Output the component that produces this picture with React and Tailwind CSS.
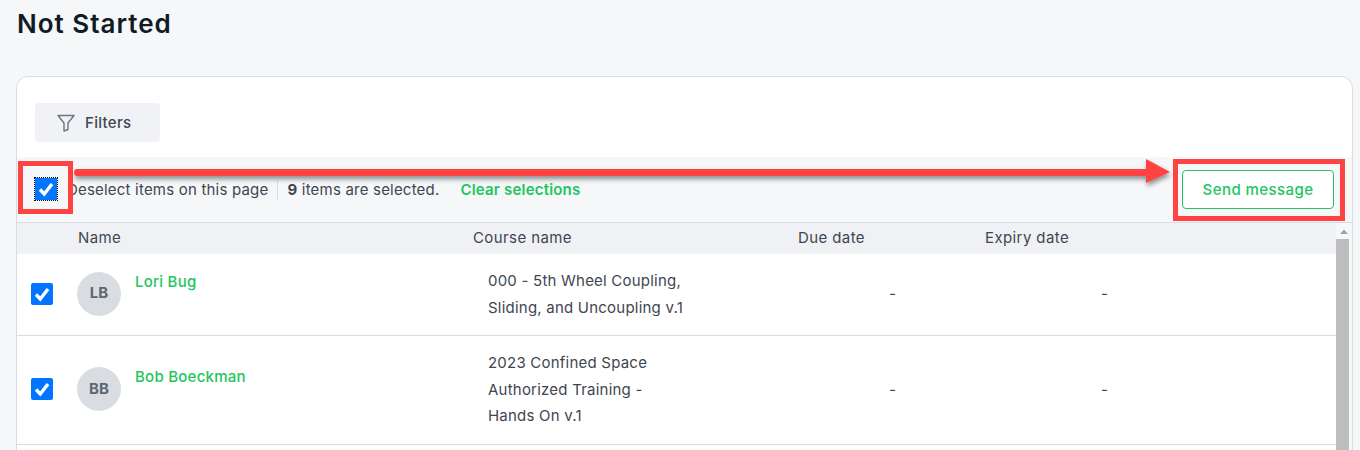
import React from 'react';

const rows = [
    { initials: 'LB', name: 'Lori Bug', course: ['000 - 5th Wheel Coupling,', 'Sliding, and Uncoupling v.1'], h: 'h-[82px]' },
    { initials: 'BB', name: 'Bob Boeckman', course: ['2023 Confined Space', 'Authorized Training -', 'Hands On v.1'], h: 'h-[109px]' },
];

const Check = ({ focused }) => (
    <span className={`w-[22px] h-[22px] bg-[#0075ff] rounded-[2px] flex items-center justify-center shrink-0 ${focused ? 'outline-1 outline-dotted outline-black rounded-none mb-[2px]' : ''}`}>
        <svg viewBox="0 0 22 22" className="w-full h-full">
            <path d="M5 11.5 L9.3 16 L17 6" fill="none" stroke="#fff" strokeWidth="3.4" />
        </svg>
    </span>
);

const Row = ({ row }) => (
    <div className={`${row.h} flex border-b border-[#d9dde2] bg-white pr-[17px]`}>
        <div className="w-[60px] pl-[14px] pb-[2px] flex items-center"><Check /></div>
        <div className="w-[396px] pb-[2px] flex items-center">
            <div className="w-[44px] h-[44px] rounded-full bg-[#d9dde2] text-[#5d6772] font-bold text-[15px] tracking-normal flex items-center justify-center">{row.initials}</div>
            <div className="ml-[14px] text-[#22c55e] font-medium text-[15px] tracking-[0.25px] leading-[20px] pb-[24px]">{row.name}</div>
        </div>
        <div className="w-[325px] pl-[15px] flex flex-col justify-center text-[15px] tracking-[0.22px] leading-[26.5px] text-[#3f4650]">
            {row.course.map(c => <div key={c}>{c}</div>)}
        </div>
        <div className="w-[187px] pl-[91px] flex items-center text-[15px] text-[#3f4650]">-</div>
        <div className="pl-[116px] flex items-center text-[15px] text-[#3f4650]">-</div>
    </div>
);

export default function App() {
    return (
        <div className="relative h-[450px] w-[1360px] overflow-hidden bg-[#f6f7f9] font-['Inter',sans-serif] tracking-[0.2px]">
            <h1 className="pl-[17px] pt-[8px] text-[26px] leading-[32px] font-semibold tracking-[1px] text-[#101b26]">Not Started</h1>

            <div className="mt-[36px] ml-[16px] w-[1337px] h-[400px] bg-white border border-[#d9dde2] rounded-t-[12px]">
                <div className="pt-[26px] pl-[18px] pb-[15px]">
                    <button className="w-[125px] h-[39px] rounded-[4px] bg-[#f1f2f5] flex items-center pl-[22px] gap-[10px] text-[15px] tracking-[0.3px] font-medium text-[#3f4650]">
                        <svg viewBox="0 0 18 18" className="w-[18px] h-[18px]" fill="none" stroke="#6b7480" strokeWidth="1.4" strokeLinejoin="round">
                            <path d="M1 1.5 H17 L11 9 V15.5 L7 17 V9 Z" />
                        </svg>
                        <span className="pt-[1px]">Filters</span>
                    </button>
                </div>

                <div className="h-[66px] bg-[#f6f7f9] border-b border-[#d9dde2] flex items-center pl-[18px] pr-[18px] text-[15px] text-[#3f4650]">
                    <Check focused />
                    <span className="ml-[10px] pt-[2px]">Deselect items on this page</span>
                    <span className="w-px h-[20px] bg-[#d9dde2] mx-[9px]" />
                    <span className="pt-[2px]"><b className="font-bold">9</b> items are selected.</span>
                    <span className="ml-[21px] pt-[2px] font-semibold text-[#22c55e]">Clear selections</span>
                    <button className="ml-auto w-[152px] h-[39px] pt-[1px] bg-white border border-[#22c55e] rounded-[4px] text-[#22c55e] font-medium tracking-[0.43px]">Send message</button>
                </div>

                <div className="h-[31px] bg-[#eff1f4] flex items-center text-[15px] tracking-[0.4px] text-[#3f4650]">
                    <span className="ml-[61px] w-[395px]">Name</span>
                    <span className="w-[325px]">Course name</span>
                    <span className="w-[187px]">Due date</span>
                    <span>Expiry date</span>
                </div>

                <div>
                    {rows.map(r => <Row key={r.name} row={r} />)}
                </div>
            </div>

            {/* scrollbar */}
            <div className="absolute left-[1336px] top-[223px] w-[16px] h-[227px] bg-[#f6f7f9]">
                <svg viewBox="0 0 16 16" className="w-[16px] h-[16px]"><path d="M4 11 L8 6.5 L12 11 Z" fill="#a3a3a3" /></svg>
                <div className="w-[13px] h-[211px] bg-[#bdbdbd]" />
            </div>

            {/* annotation */}
            <div className="absolute left-[18px] top-[161px] w-[55px] h-[53px] border-[5px] border-[#ff4242]" />
            <div className="absolute left-[1173px] top-[159px] w-[172px] h-[62px] border-[5px] border-[#ff4242]" />
            <svg className="absolute left-0 top-0 pointer-events-none" width="1360" height="450">
                <defs>
                    <filter id="sh" x="-5%" y="-100%" width="110%" height="300%">
                        <feDropShadow dx="1" dy="3" stdDeviation="2.5" floodColor="#000" floodOpacity="0.45" />
                    </filter>
                </defs>
                <path filter="url(#sh)" d="M77 169 H1146 V159 L1170 172 L1146 183 V176 H77 Q74 176 74 172.5 Q74 169 77 169 Z" fill="#ff4242" />
            </svg>
        </div>
    );
}
